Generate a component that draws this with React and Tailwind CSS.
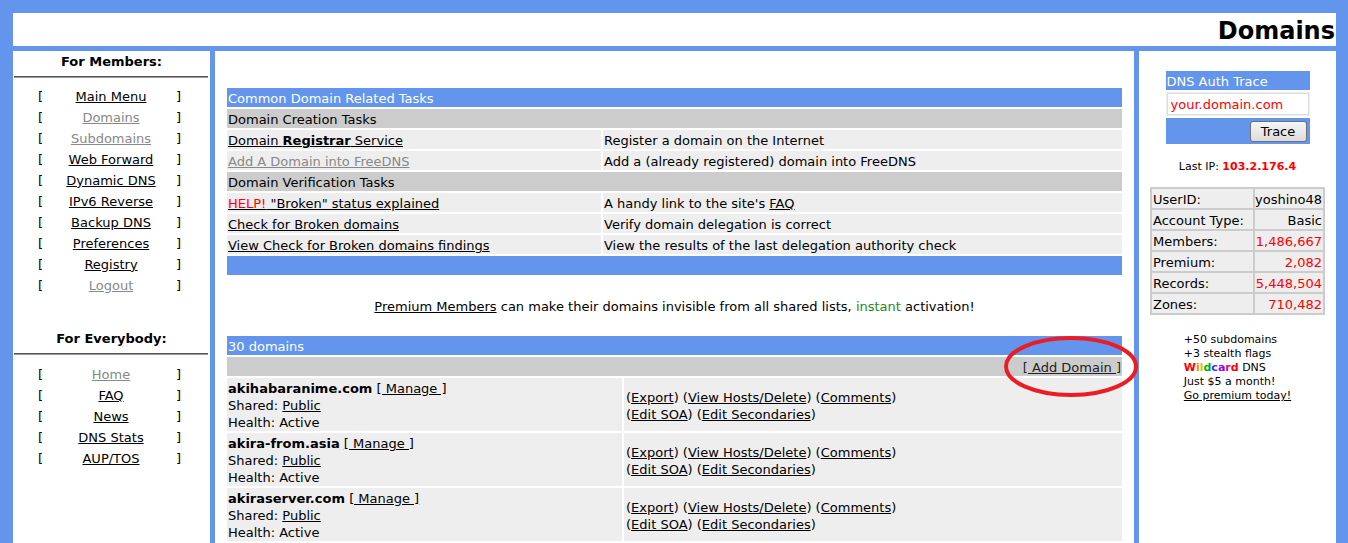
import React from "react";

const memberLinks = [
  { name: "Main Menu" },
  { name: "Domains", dim: true },
  { name: "Subdomains", dim: true },
  { name: "Web Forward" },
  { name: "Dynamic DNS" },
  { name: "IPv6 Reverse" },
  { name: "Backup DNS" },
  { name: "Preferences" },
  { name: "Registry" },
  { name: "Logout", dim: true },
];

const everybodyLinks = [
  { name: "Home", dim: true },
  { name: "FAQ" },
  { name: "News" },
  { name: "DNS Stats" },
  { name: "AUP/TOS" },
];

const stats = [
  { label: "UserID:", value: "yoshino48" },
  { label: "Account Type:", value: "Basic" },
  { label: "Members:", value: "1,486,667", red: true },
  { label: "Premium:", value: "2,082", red: true },
  { label: "Records:", value: "5,448,504", red: true },
  { label: "Zones:", value: "710,482", red: true },
];

const domains = ["akihabaranime.com", "akira-from.asia", "akiraserver.com"];

const wildcard = [
  ["W", "text-[#ff0000]"],
  ["i", "text-[#ff8800]"],
  ["l", "text-[#c8c800]"],
  ["d", "text-[#00b000]"],
  ["c", "text-[#3333ff]"],
  ["a", "text-[#9900ff]"],
  ["r", "text-[#ff0066]"],
  ["d", "text-[#ff0000]"],
];

// one 19px table cell, text sits 1px low like the original
const cell = "h-[19px] pt-[1px] leading-[19px]";

const NavList = ({ links }) => (
  <div className="flex flex-col">
    {links.map((link) => (
      <div key={link.name} className="flex h-[21px] items-center pl-[25px]">
        <span className="w-[8px]">[</span>
        <a
          href="#"
          className={`w-[130px] text-center underline ${
            link.dim ? "text-[#888]" : "text-black"
          }`}
        >
          {link.name}
        </a>
        <span>]</span>
      </div>
    ))}
  </div>
);

const SideHeading = ({ children }) => (
  <>
    <h3 className="text-center font-bold leading-[21px]">{children}</h3>
    <div className="ml-[1px] mr-[2px] mt-[4px] border-t border-b border-t-[#555] border-b-[#999]" />
  </>
);

const Paren = ({ children }) => (
  <>
    (<a href="#" className="underline">{children}</a>)
  </>
);

export default function App() {
  return (
    <div className="min-h-screen bg-[#6495ed] pl-[13px] pr-[12px] pt-[13px] font-['DejaVu_Sans',sans-serif] text-[13px] text-black">
      {/* Title bar */}
      <div className="flex h-[33px] items-center justify-end bg-white pr-[1px] pt-[2px]">
        <h1 className="text-[24px] font-bold leading-none">Domains</h1>
      </div>

      <div className="mt-[5px] flex gap-[5px]">
        {/* Left nav */}
        <div className="min-h-[492px] w-[197px] shrink-0 bg-white">
          <SideHeading>For Members:</SideHeading>
          <div className="mt-[8px]">
            <NavList links={memberLinks} />
          </div>
          <div className="mt-[32px]">
            <SideHeading>For Everybody:</SideHeading>
          </div>
          <div className="mt-[9px]">
            <NavList links={everybodyLinks} />
          </div>
        </div>

        {/* Main */}
        <div className="flex-1 bg-white px-[12px] pt-[37px]">
          <div className="flex flex-col gap-[2px]">
            <div className={`${cell} bg-[#6495ed] pl-[1px] text-white`}>
              Common Domain Related Tasks
            </div>
            <div className={`${cell} bg-[#ccc] pl-[1px]`}>Domain Creation Tasks</div>
            <div className="grid grid-cols-[374px_1fr] gap-[2px]">
              <div className={`${cell} bg-[#eee] pl-[1px]`}>
                <a href="#" className="underline">
                  Domain <b>Registrar</b> Service
                </a>
              </div>
              <div className={`${cell} bg-[#eee] pl-[1px]`}>
                Register a domain on the Internet
              </div>
            </div>
            <div className="grid grid-cols-[374px_1fr] gap-[2px]">
              <div className={`${cell} bg-[#eee] pl-[1px]`}>
                <a href="#" className="text-[#888] underline">
                  Add A Domain into FreeDNS
                </a>
              </div>
              <div className={`${cell} bg-[#eee] pl-[1px]`}>
                Add a (already registered) domain into FreeDNS
              </div>
            </div>
            <div className={`${cell} bg-[#ccc] pl-[1px]`}>Domain Verification Tasks</div>
            <div className="grid grid-cols-[374px_1fr] gap-[2px]">
              <div className={`${cell} bg-[#eee] pl-[1px]`}>
                <a href="#" className="underline">
                  <span className="text-[#ff0000]">HELP!</span> "Broken" status explained
                </a>
              </div>
              <div className={`${cell} bg-[#eee] pl-[1px]`}>
                A handy link to the site's{" "}
                <a href="#" className="underline">
                  FAQ
                </a>
              </div>
            </div>
            <div className="grid grid-cols-[374px_1fr] gap-[2px]">
              <div className={`${cell} bg-[#eee] pl-[1px]`}>
                <a href="#" className="underline">
                  Check for Broken domains
                </a>
              </div>
              <div className={`${cell} bg-[#eee] pl-[1px]`}>
                Verify domain delegation is correct
              </div>
            </div>
            <div className="grid grid-cols-[374px_1fr] gap-[2px]">
              <div className={`${cell} bg-[#eee] pl-[1px]`}>
                <a href="#" className="underline">
                  View Check for Broken domains findings
                </a>
              </div>
              <div className={`${cell} bg-[#eee] pl-[1px]`}>
                View the results of the last delegation authority check
              </div>
            </div>
            <div className="h-[19px] bg-[#6495ed]" />
          </div>

          <p className="mt-[22px] pt-[1px] text-center leading-[17px]">
            <a href="#" className="underline">
              Premium Members
            </a>{" "}
            can make their domains invisible from all shared lists,{" "}
            <span className="text-[#228b22]">instant</span> activation!
          </p>

          {/* Domain list */}
          <div className="relative mt-[21px] flex flex-col gap-[2px]">
            <div className={`${cell} bg-[#6495ed] pl-[1px] text-white`}>30 domains</div>
            <div className={`${cell} bg-[#ccc] pr-[1px] text-right`}>
              <a href="#" className="text-[#222] underline">
                [ Add Domain ]
              </a>
            </div>
            {domains.map((d) => (
              <div key={d} className="grid grid-cols-[395px_1fr] gap-[2px]">
                <div className="bg-[#eee] px-[1px] pt-[2px] leading-[17px]">
                  <div>
                    <b>{d}</b>{" "}
                    <a href="#" className="underline">
                      [ Manage ]
                    </a>
                  </div>
                  <div>
                    Shared:{" "}
                    <a href="#" className="underline">
                      Public
                    </a>
                  </div>
                  <div>Health: Active</div>
                </div>
                <div className="flex flex-col justify-center bg-[#eee] pl-[2px] pt-[2px] leading-[17px]">
                  <div>
                    <Paren>Export</Paren> <Paren>View Hosts/Delete</Paren>{" "}
                    <Paren>Comments</Paren>
                  </div>
                  <div>
                    <Paren>Edit SOA</Paren> <Paren>Edit Secondaries</Paren>
                  </div>
                </div>
              </div>
            ))}
            {/* hand-drawn highlight */}
            <svg
              className="pointer-events-none absolute left-[777px] top-0"
              width="134"
              height="61"
              viewBox="0 0 134 61"
            >
              <ellipse
                cx="67"
                cy="30.5"
                rx="65"
                ry="28.5"
                fill="none"
                stroke="#ec1c24"
                strokeWidth="4"
              />
            </svg>
          </div>
        </div>

        {/* Right column */}
        <div className="w-[197px] shrink-0 bg-white pt-[20px]">
          <div className="mx-auto w-[144px]">
            <div className={`${cell} bg-[#6495ed] pl-[1px] text-white`}>DNS Auth Trace</div>
            <div className="mt-[2px] bg-[#eee] p-[1px]">
              <input
                type="text"
                defaultValue="your.domain.com"
                className="h-[22px] w-full border border-[#ddd] bg-white px-[3px] pt-[1px] text-[13px] text-[#ff0000] outline-none"
              />
            </div>
            <div className="mt-[2px] flex h-[26px] items-center justify-end bg-[#6495ed] pr-[3px]">
              <button className="h-[21px] w-[57px] rounded-[3px] border border-[#707070] bg-gradient-to-b from-[#f6f6f6] to-[#dcdcdc] text-[13px] leading-none">
                Trace
              </button>
            </div>
          </div>

          <p className="mt-[15px] pt-[1px] text-center text-[11px] leading-[14px]">
            Last IP: <b className="text-[#ff0000]">103.2.176.4</b>
          </p>

          <div className="mx-auto mt-[13px] grid w-[175px] grid-cols-[101px_68px] gap-[2px] bg-[#ccc] p-[2px]">
            {stats.map((s) => (
              <React.Fragment key={s.label}>
                <div className={`${cell} bg-[#eee] pl-[1px]`}>{s.label}</div>
                <div
                  className={`${cell} bg-[#eee] pr-[1px] text-right ${
                    s.red ? "text-[#ff0000]" : ""
                  }`}
                >
                  {s.value}
                </div>
              </React.Fragment>
            ))}
          </div>

          <div className="mx-auto mt-[17px] w-fit pt-[1px] text-[11px] leading-[14px]">
            <div>+50 subdomains</div>
            <div>+3 stealth flags</div>
            <div>
              <b>
                {wildcard.map(([ch, cls], i) => (
                  <span key={i} className={cls}>
                    {ch}
                  </span>
                ))}
              </b>{" "}
              DNS
            </div>
            <div>Just $5 a month!</div>
            <a href="#" className="underline">
              Go premium today!
            </a>
          </div>
        </div>
      </div>
    </div>
  );
}
